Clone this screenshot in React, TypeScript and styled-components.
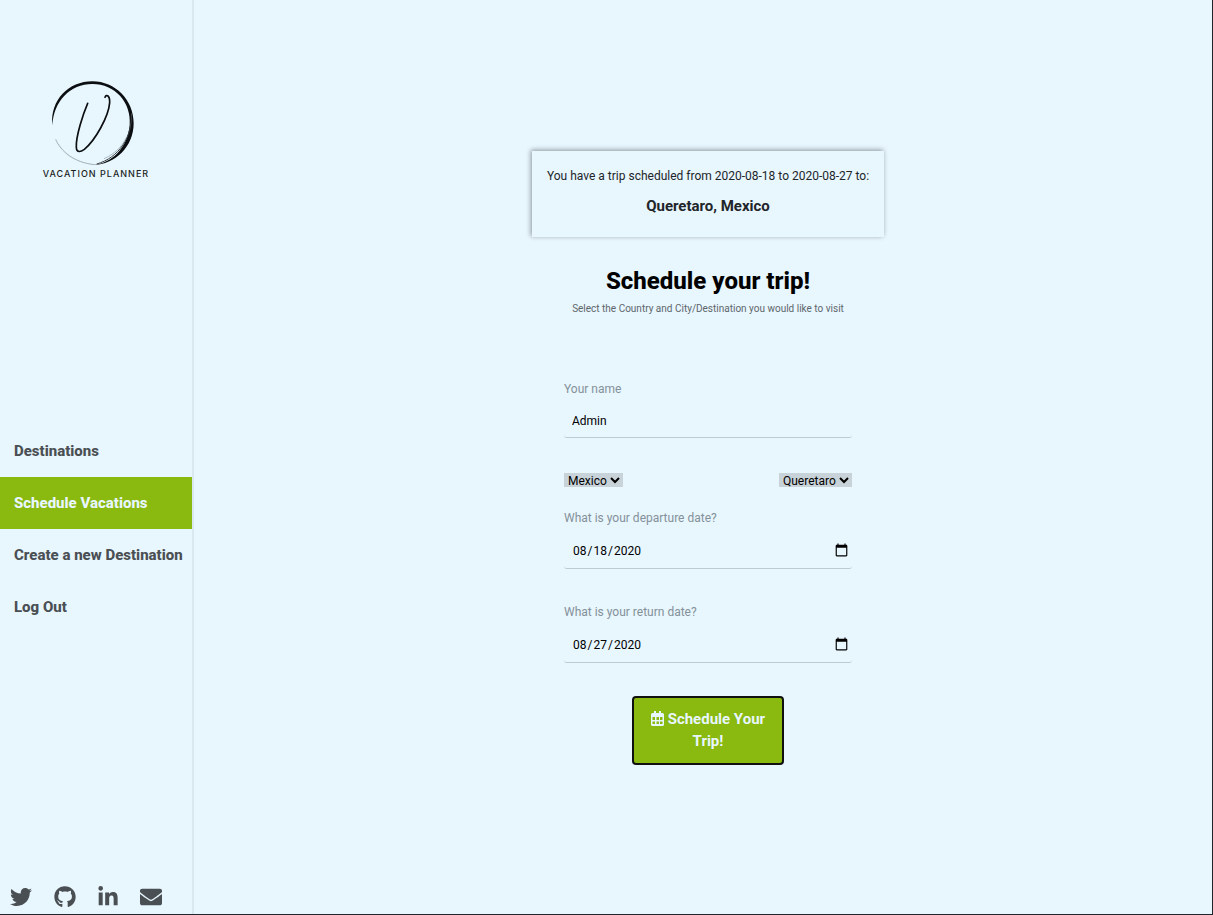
import React from 'react';
import styled, { createGlobalStyle } from 'styled-components';
import { FaTwitter, FaGithub, FaLinkedinIn, FaEnvelope } from 'react-icons/fa';

const GlobalStyle = createGlobalStyle`
  *, *::before, *::after { box-sizing: border-box; }
  body {
    margin: 0;
    background: #e8f6fe;
    font-family: Roboto, "Liberation Sans", sans-serif;
    font-size: 12px;
    color: #000;
  }
`;

const Page = styled.div`
  display: flex;
  min-height: 100vh;
  border-right: 1px solid #212529;
  border-bottom: 1px solid #212529;
`;

const Sidebar = styled.aside`
  flex: none;
  width: 16%;
  min-width: 194px;
  display: flex;
  flex-direction: column;
  justify-content: space-between;
  border-right: 2px solid #d9e7ee;
`;

const Logo = styled.div`
  display: flex;
  flex-direction: column;
  align-items: center;
  padding-top: 80px;
  svg { display: block; width: 87px; height: 87px; margin-right: 6px; }
`;

const LogoName = styled.span`
  font-family: Inter, "Liberation Sans", sans-serif;
  font-size: 9px;
  font-weight: 500;
  line-height: 14px;
  letter-spacing: 1px;
  color: #1b1f22;
  white-space: nowrap;
`;

const Nav = styled.nav`
  display: flex;
  flex-direction: column;
`;

const NavLink = styled.a<{ $active?: boolean }>`
  padding: 0 0 0 14px;
  font-size: 15px;
  font-weight: 800;
  line-height: 52px;
  white-space: nowrap;
  text-decoration: none;
  color: ${p => (p.$active ? '#e8f6fe' : '#4a4f53')};
  background: ${p => (p.$active ? '#8ab90f' : 'transparent')};
`;

const Social = styled.div`
  display: flex;
  gap: 22px;
  padding: 10px 10px 6px;
`;

const SocialLink = styled.a<{ $width: number }>`
  display: flex;
  color: #4a4f53;
  svg { width: ${p => p.$width}px; height: 22px; }
`;

const Main = styled.main`
  flex: 1;
  display: flex;
  flex-direction: column;
  align-items: center;
  justify-content: center;
  padding: 2px 0 0 10px;
`;

const TripCard = styled.section`
  padding: 16px 15px 20px;
  text-align: center;
  color: #212529;
  box-shadow: -1px -1px 5px rgba(0, 0, 0, 0.4);
  p { margin: 0; line-height: 18px; }
  h3 { margin: 10px 0 0; font-size: 15px; line-height: 22px; font-weight: 700; }
`;

const Title = styled.h1`
  margin: 30px 0 0;
  font-size: 24px;
  line-height: 28px;
  font-weight: 800;
`;

const Subtitle = styled.p`
  margin: 6px 0 0;
  font-size: 10px;
  line-height: 16px;
  color: #5d666b;
`;

const Form = styled.form`
  width: 288px;
  margin-top: 64px;
  display: flex;
  flex-direction: column;
`;

const Field = styled.div`
  display: flex;
  flex-direction: column;
  gap: 7px;
  label { line-height: 16px; color: #84919a; }
`;

const Input = styled.input`
  width: 100%;
  height: 34px;
  padding: 0 8px;
  border: 0;
  border-bottom: 1px solid #bccbd3;
  border-radius: 3px;
  background: transparent;
  font: inherit;
  color: #000;
  outline: none;
`;

const DateInput = styled(Input)`
  height: 36px;
  padding-right: 1px;
  &::-webkit-calendar-picker-indicator { font-size: 15px; }
`;

const SelectRow = styled.div`
  display: flex;
  justify-content: space-between;
  margin: 35px 0 23px;
`;

const Select = styled.select`
  height: 14px;
  padding: 0;
  border: 0;
  border-radius: 0;
  background: #c8d3d9;
  font: inherit;
  color: #000;
`;

const ReturnField = styled(Field)`
  margin-top: 35px;
`;

const SubmitButton = styled.button`
  align-self: center;
  width: 152px;
  margin-top: 33px;
  padding: 10px 8px 11px;
  border: 2px solid #101010;
  border-radius: 4px;
  background: #8ab90f;
  color: #e8f6fe;
  font: 700 15px/22px Roboto, "Liberation Sans", sans-serif;
  svg { width: 13px; height: 15px; vertical-align: -2px; }
`;

const links = ['Destinations', 'Schedule Vacations', 'Create a new Destination', 'Log Out'];

const socials = [
  { name: 'Twitter', Icon: FaTwitter, width: 22 },
  { name: 'GitHub', Icon: FaGithub, width: 22 },
  { name: 'LinkedIn', Icon: FaLinkedinIn, width: 20 },
  { name: 'Email', Icon: FaEnvelope, width: 22 },
];

function LogoMark() {
  return (
    <svg viewBox="60 30 261 261" fill="none" aria-hidden="true">
      <path
        d="M67 166C60 90 116 34 187 34C256 34 311 90 311 160C311 230 256 284 190 285C244 280 292 236 299 165C305 98 255 42 187 42C120 42 71 94 67 166Z"
        fill="#0c0f11"
      />
      <path d="M304 130C308 200 266 264 200 282" stroke="#3b4246" strokeWidth="3" />
      <path d="M77 208C92 244 132 278 194 284" stroke="#7f8b92" strokeWidth="2" />
      <path d="M86 222C104 252 134 268 156 276" stroke="#b3c0c7" strokeWidth="1" />
      <path d="M222 266C250 254 276 232 290 200" stroke="#90a0a9" strokeWidth="2" />
      <path
        d="M173 100C160 130 137 200 139 232C140 249 152 246 163 238C195 212 236 140 239 98C240 77 229 71 225 82"
        stroke="#0c0f11"
        strokeWidth="5"
        strokeLinecap="round"
      />
    </svg>
  );
}

function CalendarIcon() {
  return (
    <svg viewBox="0 0 26 30" fill="currentColor" aria-hidden="true">
      <path
        fillRule="evenodd"
        d="M6 0h4v4h6V0h4v4h3a3 3 0 0 1 3 3v20a3 3 0 0 1-3 3H3a3 3 0 0 1-3-3V7a3 3 0 0 1 3-3h3ZM3 12v6h5v-6ZM11 12v6h5v-6ZM18 12v6h5v-6ZM3 21v5h5v-5ZM11 21v5h5v-5ZM18 21v5h5v-5Z"
      />
    </svg>
  );
}

export default function App() {
  return (
    <>
      <GlobalStyle />
      <Page>
        <Sidebar>
          <Logo>
            <LogoMark />
            <LogoName>VACATION PLANNER</LogoName>
          </Logo>
          <Nav>
            {links.map(name => (
              <NavLink key={name} href="#" $active={name === 'Schedule Vacations'}>{name}</NavLink>
            ))}
          </Nav>
          <Social>
            {socials.map(({ name, Icon, width }) => (
              <SocialLink key={name} href="#" aria-label={name} $width={width}><Icon /></SocialLink>
            ))}
          </Social>
        </Sidebar>
        <Main>
          <TripCard>
            <p>You have a trip scheduled from 2020-08-18 to 2020-08-27 to:</p>
            <h3>Queretaro, Mexico</h3>
          </TripCard>
          <Title>Schedule your trip!</Title>
          <Subtitle>Select the Country and City/Destination you would like to visit</Subtitle>
          <Form onSubmit={e => e.preventDefault()}>
            <Field>
              <label htmlFor="name">Your name</label>
              <Input id="name" type="text" defaultValue="Admin" />
            </Field>
            <SelectRow>
              <Select aria-label="Country"><option>Mexico</option></Select>
              <Select aria-label="City"><option>Queretaro</option></Select>
            </SelectRow>
            <Field>
              <label htmlFor="departure">What is your departure date?</label>
              <DateInput id="departure" type="date" defaultValue="2020-08-18" />
            </Field>
            <ReturnField>
              <label htmlFor="return">What is your return date?</label>
              <DateInput id="return" type="date" defaultValue="2020-08-27" />
            </ReturnField>
            <SubmitButton type="submit"><CalendarIcon /> Schedule Your Trip!</SubmitButton>
          </Form>
        </Main>
      </Page>
    </>
  );
}
